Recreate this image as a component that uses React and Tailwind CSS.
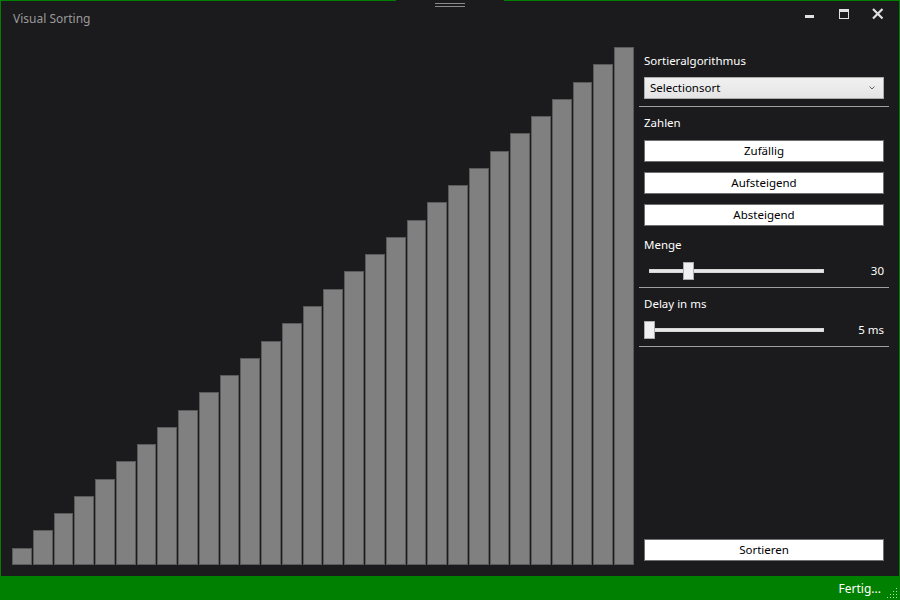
import React from "react";

const BAR_COUNT = 30;
const MAX_H = 518;
const bars = Array.from({ length: BAR_COUNT }, (_, i) => Math.round((MAX_H * (i + 1)) / BAR_COUNT));

const font = { fontFamily: '"Segoe UI", "Noto Sans", sans-serif' };

function Button({ children, className = "" }) {
  return (
    <div className={`h-[22px] bg-white border border-[#707070] flex items-center justify-center text-[11.5px] text-black leading-none ${className}`}>
      {children}
    </div>
  );
}

function Slider({ thumb, value }) {
  return (
    <div className="flex items-center h-[18px]">
      <div className="relative w-[185px] h-[18px] flex items-center">
        <div className="ml-[5px] w-[175px] h-[4px] bg-[#e7e7e7] border border-[#d6d6d6]" />
        <div
          className="absolute top-0 w-[11px] h-[18px] bg-[#f0f0f0] border border-[#acacac]"
          style={{ left: thumb }}
        />
      </div>
      <span className="ml-auto text-white">{value}</span>
    </div>
  );
}

function Separator({ className = "" }) {
  return <div className={`h-px bg-[#a0a0a0] ${className}`} />;
}

export default function App() {
  return (
    <div className="w-[900px] h-[600px] flex flex-col bg-[#1b1b1d] select-none" style={font}>
      {/* top border with grip */}
      <div className="relative flex h-px">
        <div className="flex-1 bg-[#008000]" />
        <div className="w-[108px] bg-[#1b1b1d]" />
        <div className="flex-1 bg-[#008000]" />
        <div className="absolute left-[435px] top-[3px] w-[30px] h-[4px] flex flex-col justify-between">
          <div className="h-px bg-[#8a8a8a]" />
          <div className="h-px bg-[#8a8a8a]" />
        </div>
      </div>

      <div className="flex-1 flex flex-col border-x border-[#008000]">
        {/* title bar */}
        <div className="h-[30px] flex items-center pl-[12px]">
          <span className="pt-[5px] text-[12px] text-[#9a9a9a]">Visual Sorting</span>
          <div className="ml-auto flex items-center h-full">
            <svg width="34" height="30" viewBox="0 0 34 30" className="block">
              <rect x="8" y="14" width="9" height="3" fill="#e0e0e0" />
            </svg>
            <svg width="34" height="30" viewBox="0 0 34 30" className="block">
              <rect x="8.5" y="8.5" width="9" height="9" fill="none" stroke="#e0e0e0" strokeWidth="1" />
              <rect x="8" y="8" width="10" height="3" fill="#e0e0e0" />
            </svg>
            <svg width="34" height="30" viewBox="0 0 34 30" className="block">
              <path d="M8 8 L17.5 17.5 M17.5 8 L8 17.5" stroke="#e0e0e0" strokeWidth="2.2" />
            </svg>
          </div>
        </div>

        {/* body */}
        <div className="flex-1 flex">
          <div className="pl-[11px] pt-[16px] pb-[10px] flex">
            <div className="w-[622px] h-[518px] flex items-end gap-px">
              {bars.map((h, i) => (
                <div key={i} className="flex-1 bg-[#808080] border border-[#5a5a5a]" style={{ height: h }} />
              ))}
            </div>
          </div>

          <div className="ml-[5px] w-[250px] flex flex-col pt-[22px] pb-[15px] text-white text-[11.5px]">
            <div className="px-[5px] h-[16px] leading-[16px]">Sortieralgorithmus</div>
            <div className="mx-[5px] mt-[8px] h-[22px] border border-[#acacac] bg-gradient-to-b from-[#f0f0f0] to-[#e5e5e5] flex items-center pl-[5px] pr-[8px] text-black">
              <span>Selectionsort</span>
              <svg width="6" height="4" viewBox="0 0 6 4" className="ml-auto">
                <path d="M0.5 0.5 L3 3 L5.5 0.5" fill="none" stroke="#606060" strokeWidth="1" />
              </svg>
            </div>
            <Separator className="mt-[7px]" />
            <div className="px-[5px] mt-[8px] h-[16px] leading-[16px]">Zahlen</div>
            <div className="px-[5px] mt-[9px] flex flex-col gap-[10px]">
              <Button>Zufällig</Button>
              <Button>Aufsteigend</Button>
              <Button>Absteigend</Button>
            </div>
            <div className="px-[5px] mt-[11px] h-[16px] leading-[16px]">Menge</div>
            <div className="px-[5px] mt-[9px]">
              <Slider thumb={39} value="30" />
            </div>
            <Separator className="mt-[7px]" />
            <div className="px-[5px] mt-[8px] h-[16px] leading-[16px]">Delay in ms</div>
            <div className="px-[5px] mt-[9px]">
              <Slider thumb={0} value="5 ms" />
            </div>
            <Separator className="mt-[7px]" />
            <div className="flex-1" />
            <div className="px-[5px]">
              <Button>Sortieren</Button>
            </div>
          </div>
        </div>
      </div>

      {/* status bar */}
      <div className="h-[24px] bg-[#008000] flex items-center justify-end">
        <span className="pt-[1px] text-[12px] text-white">Fertig...</span>
        <svg width="16" height="24" viewBox="0 0 16 24" className="block ml-[3px]">
          {[[12, 21], [9, 21], [6, 21], [3, 21], [12, 18], [9, 18], [6, 18], [12, 15], [9, 15], [12, 12]].map(([x, y], i) => (
            <rect key={i} x={x} y={y} width="1" height="1" fill="#b8d8b8" />
          ))}
        </svg>
      </div>
    </div>
  );
}
